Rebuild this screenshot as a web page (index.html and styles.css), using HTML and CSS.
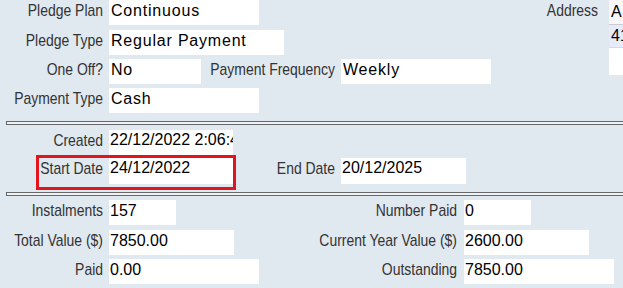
FILE: index.html
```html
<!DOCTYPE html>
<html>
<head>
<meta charset="utf-8">
<link rel="stylesheet" href="styles.css">
</head>
<body>
<div class="page">
  <section class="sec sec-top">
    <div class="stack fields">
      <div class="row first">
        <span class="lbl">Pledge Plan</span>
        <span class="val wide w150">Continuous</span>
      </div>
      <div class="row">
        <span class="lbl">Pledge Type</span>
        <span class="val wide w175">Regular Payment</span>
      </div>
      <div class="row">
        <span class="lbl">One Off?</span>
        <span class="val wide w92">No</span>
        <span class="lbl lbl-freq">Payment Frequency</span>
        <span class="val wide w150">Weekly</span>
      </div>
      <div class="row">
        <span class="lbl">Payment Type</span>
        <span class="val wide w150">Cash</span>
      </div>
    </div>
    <div class="address">
      <span class="lbl lbl-addr">Address</span>
      <div class="addr-box">
        <div class="addr-line line-1">A Block</div>
        <div class="addr-line line-2">41 Main Street</div>
        <div class="addr-line line-3"></div>
      </div>
    </div>
  </section>

  <div class="sep"></div>

  <section class="stack sec-dates">
    <div class="row">
      <span class="lbl">Created</span>
      <span class="val date w124">22/12/2022 2:06:45 PM</span>
    </div>
    <div class="row row-start">
      <span class="lbl">Start Date</span>
      <span class="val date w124">24/12/2022</span>
      <span class="lbl lbl-end">End Date</span>
      <span class="val date w125">20/12/2025</span>
      <span class="highlight"></span>
    </div>
  </section>

  <div class="sep sep-2"></div>

  <section class="sec sec-values">
    <div class="stack col-left">
      <div class="row first">
        <span class="lbl">Instalments</span>
        <span class="val num w67">157</span>
      </div>
      <div class="row">
        <span class="lbl">Total Value ($)</span>
        <span class="val num w125">7850.00</span>
      </div>
      <div class="row">
        <span class="lbl">Paid</span>
        <span class="val num w150">0.00</span>
      </div>
    </div>
    <div class="stack col-right">
      <div class="row first">
        <span class="lbl lbl-right">Number Paid</span>
        <span class="val num w67">0</span>
      </div>
      <div class="row">
        <span class="lbl lbl-right">Current Year Value ($)</span>
        <span class="val num w125">2600.00</span>
      </div>
      <div class="row">
        <span class="lbl lbl-right">Outstanding</span>
        <span class="val num w150">7850.00</span>
      </div>
    </div>
  </section>
</div>
</body>
</html>
```

FILE: styles.css
```css
html, body {
  margin: 0;
  padding: 0;
}

body {
  background: #e0e8f0;
  width: 623px;
  height: 288px;
  overflow: hidden;
  font-family: "Liberation Sans", Arial, sans-serif;
}

.page {
  width: 623px;
  height: 288px;
  overflow: hidden;
}

.sec {
  display: flex;
}

.stack {
  display: flex;
  flex-direction: column;
  gap: 4px;
}

.row {
  display: flex;
  height: 25px;
  flex: none;
}

.row.first {
  margin-bottom: 1px;
}

/* labels use a condensed face: a narrowed Liberation Sans */
.lbl {
  flex: none;
  display: flex;
  justify-content: flex-end;
  width: 103px;
  margin-right: 6px;
  font-size: 17px;
  line-height: 22px;
  color: #333333;
  white-space: nowrap;
  transform: scaleX(0.82);
  transform-origin: right center;
}

.val {
  flex: none;
  box-sizing: border-box;
  background: #ffffff;
  color: #000000;
  font-size: 16px;
  line-height: 22px;
  padding-left: 1px;
  white-space: nowrap;
  overflow: hidden;
}

.val.wide {
  letter-spacing: 0.8px;
  padding-left: 2px;
}

.val.date {
  line-height: 20px;
}

.w67 { width: 67px; }
.w92 { width: 92px; }
.w124 { width: 124px; }
.w125 { width: 125px; }
.w150 { width: 150px; }
.w175 { width: 175px; }

.fields {
  flex: none;
  width: 491px;
}

.lbl-freq {
  width: 134px;
}

.lbl-end {
  width: 102px;
}

/* address block */
.address {
  flex: none;
  display: flex;
  align-items: flex-start;
}

.lbl-addr {
  width: 107px;
  margin-right: 11px;
}

.addr-box {
  flex: none;
  width: 140px;
  display: flex;
  flex-direction: column;
}

.addr-line {
  font-size: 16px;
  color: #000;
  padding-left: 2px;
  white-space: nowrap;
  overflow: hidden;
}

.line-1 {
  height: 24px;
  line-height: 24px;
  background: #f7f7f7;
  border-bottom: 1px solid #c9ccd2;
}

.line-2 {
  height: 22px;
  line-height: 22px;
  background: #e7eaf8;
  border-bottom: 1px solid #d6d9e6;
}

.line-3 {
  height: 27px;
  background: #ffffff;
}

/* separators */
.sep {
  margin: 8px 0 0 6px;
  height: 2px;
  border: 1px solid #676767;
  border-right: none;
  background: #eef1f5;
}

.sec-dates {
  margin-top: 5px;
  gap: 3px;
}

.row-start {
  position: relative;
  height: 26px;
}

.highlight {
  position: absolute;
  left: 36px;
  top: -3px;
  width: 200px;
  height: 35px;
  box-sizing: border-box;
  border: 3px solid #e2141e;
}

.sep-2 {
  margin-top: 8px;
}

.sec-values {
  margin-top: 4px;
}

.col-left {
  flex: none;
  width: 259px;
}

.col-right {
  flex: none;
}

.lbl-right {
  width: 198px;
  margin-right: 7px;
}
```
